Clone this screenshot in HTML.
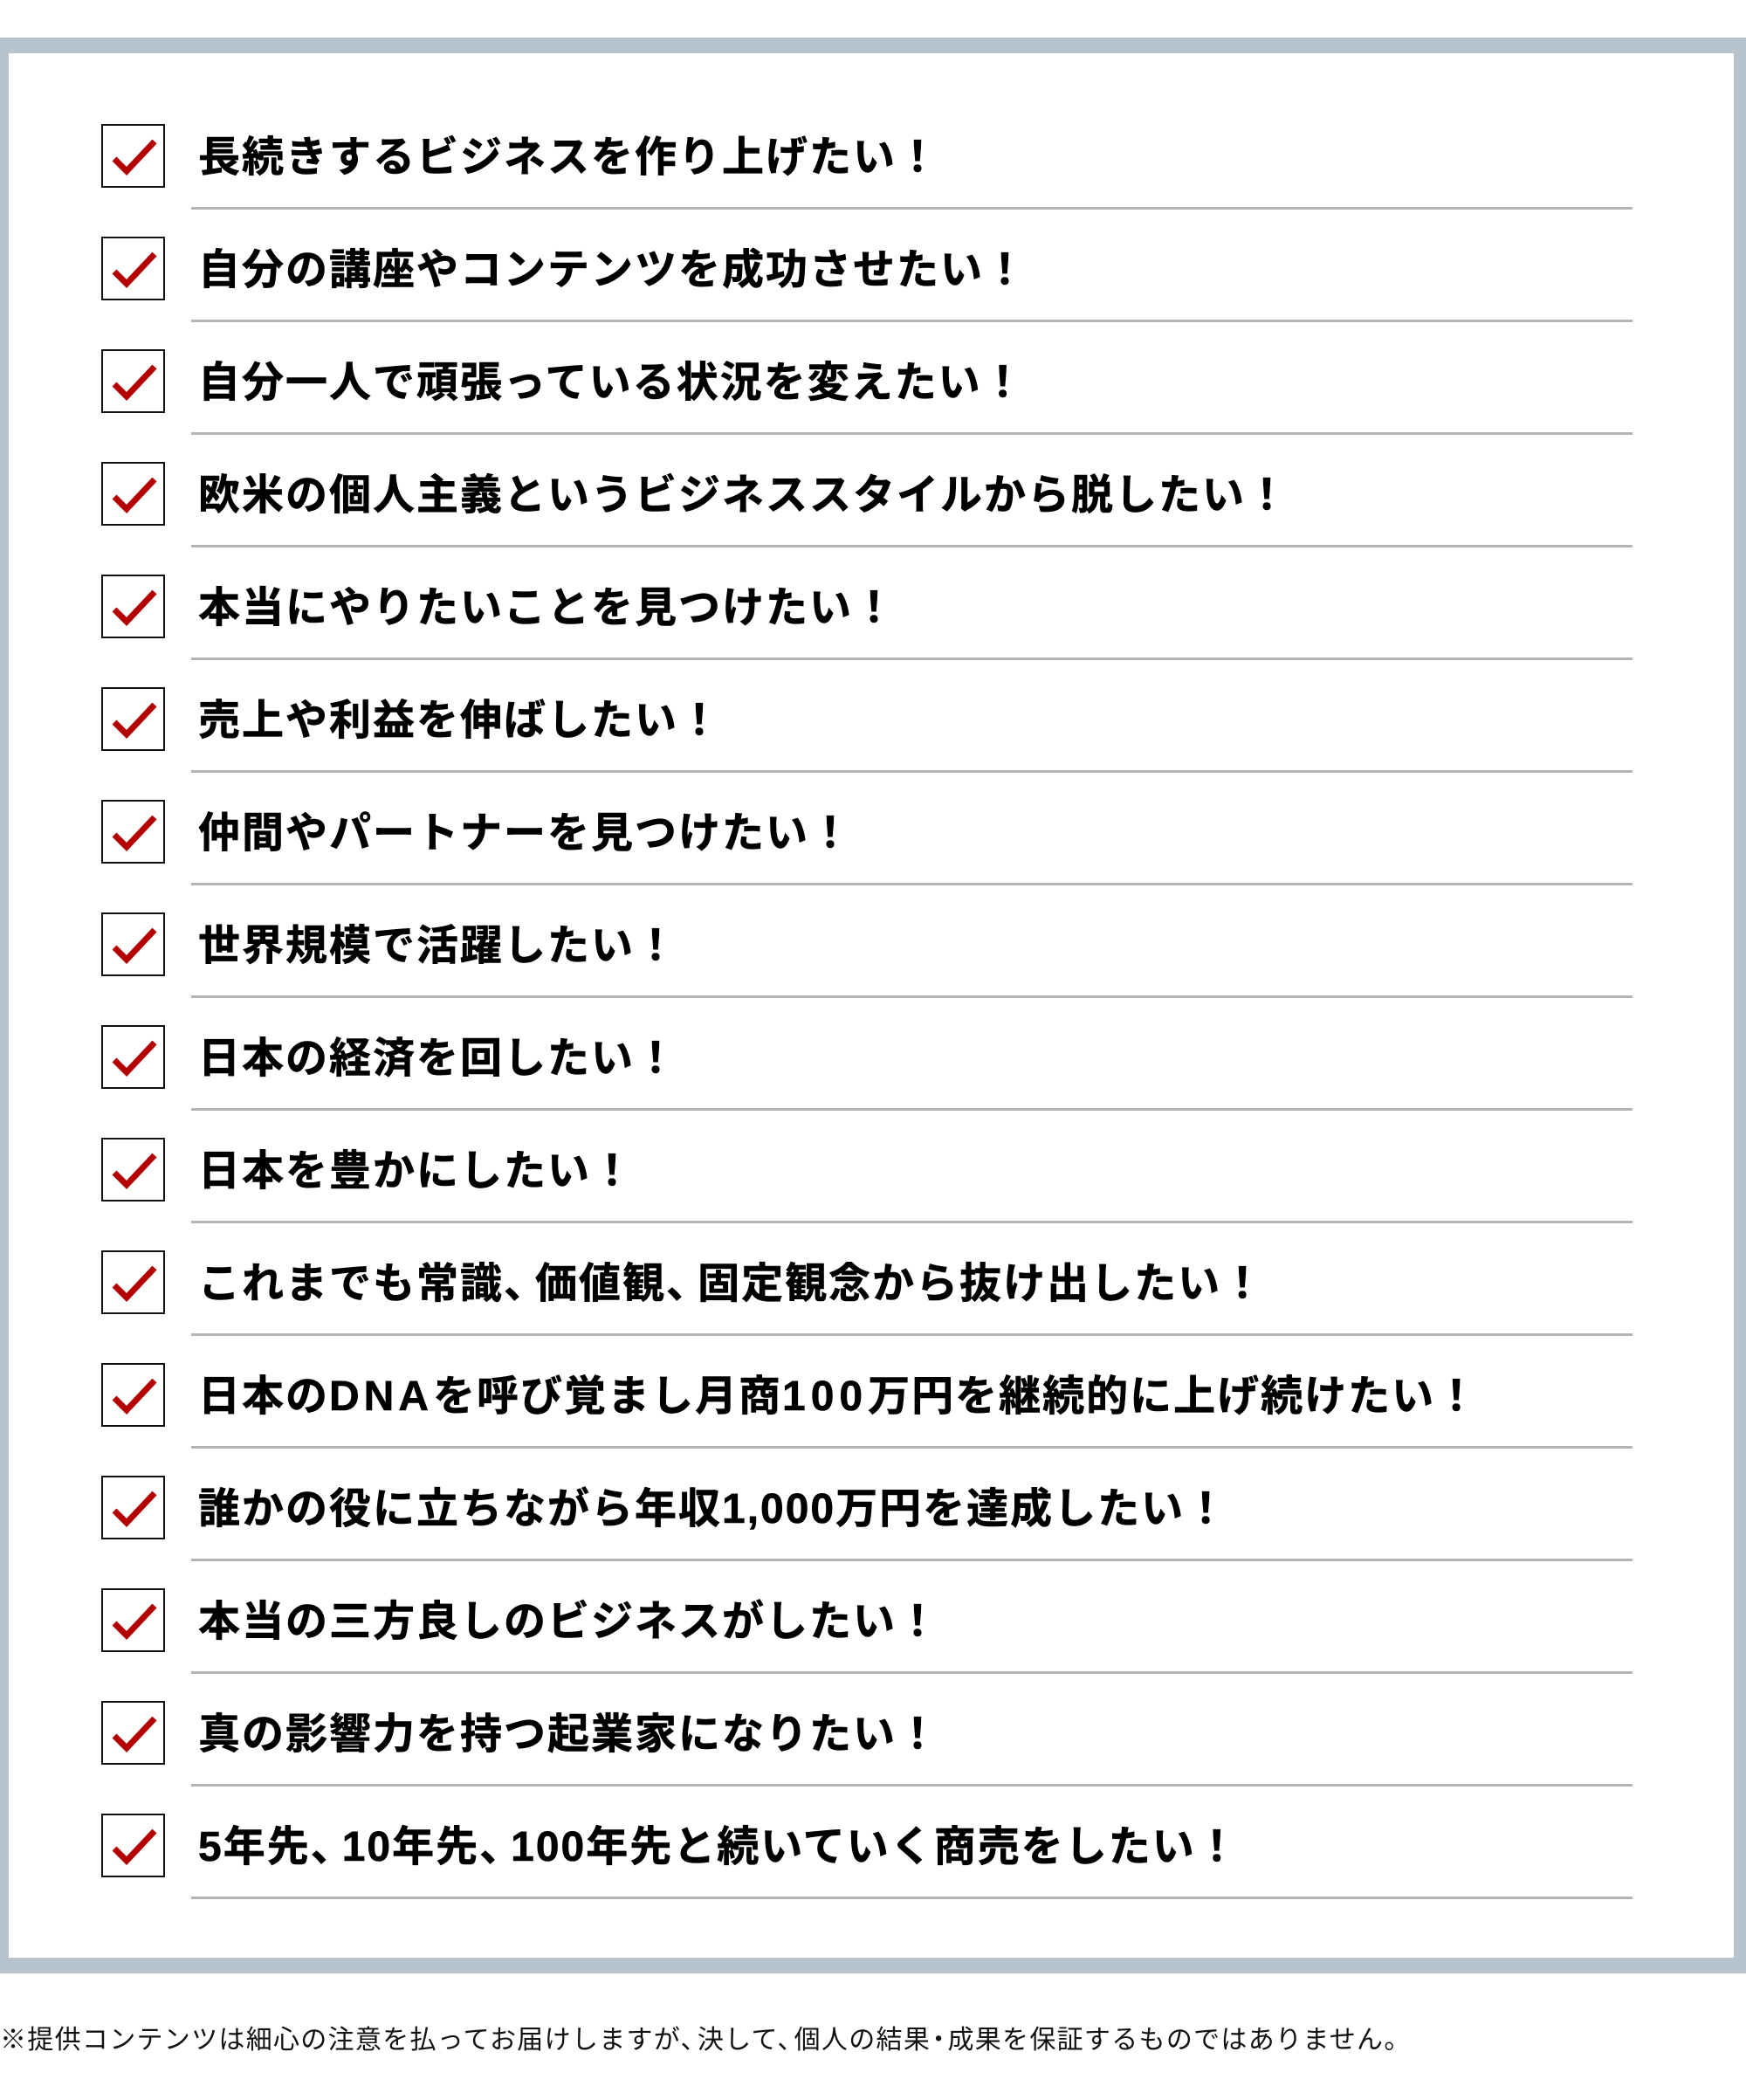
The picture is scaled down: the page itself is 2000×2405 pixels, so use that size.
<!DOCTYPE html>
<html><head><meta charset="utf-8"><style>
html,body{margin:0;padding:0;background:#fff;width:2000px;height:2405px;overflow:hidden;position:relative}
.frame{position:absolute;left:0;top:43px;width:1976px;height:2181px;border-style:solid;border-color:#b7c4cd;border-width:18px 14px 18px 10px;background:#fff}
.row{position:absolute;left:0;width:2000px;height:129px}
.box{position:absolute;left:116px;top:0;width:69px;height:69px;border:2px solid #111;background:#fff}
.box svg{position:absolute;left:-2px;top:-2px}
.t{position:absolute;left:227px;top:15px;height:48px;line-height:48px;font-family:"Liberation Sans","Noto Sans CJK JP",sans-serif;font-weight:bold;font-size:48px;letter-spacing:2px;color:#000;white-space:nowrap;-webkit-text-stroke:0.6px #000}
.c{margin-right:-14px}
.ln{position:absolute;left:219px;top:95px;width:1651px;height:3px;background:#b4b4b4}
.note{position:absolute;left:0;top:2322px;font-family:"Liberation Sans","Noto Sans CJK JP",sans-serif;font-size:30px;line-height:30px;letter-spacing:1.3px;color:#111;white-space:nowrap}
</style></head><body>
<div class="frame"></div>
<div class="row" style="top:142px"><div class="box"><svg width="73" height="73"><path d="M15 40 L29 54 L61 20" fill="none" stroke="#b40000" stroke-width="7"/></svg></div><div class="t">長続きするビジネスを作り上げたい！</div><div class="ln"></div></div>
<div class="row" style="top:271px"><div class="box"><svg width="73" height="73"><path d="M15 40 L29 54 L61 20" fill="none" stroke="#b40000" stroke-width="7"/></svg></div><div class="t">自分の講座やコンテンツを成功させたい！</div><div class="ln"></div></div>
<div class="row" style="top:400px"><div class="box"><svg width="73" height="73"><path d="M15 40 L29 54 L61 20" fill="none" stroke="#b40000" stroke-width="7"/></svg></div><div class="t">自分一人で頑張っている状況を変えたい！</div><div class="ln"></div></div>
<div class="row" style="top:529px"><div class="box"><svg width="73" height="73"><path d="M15 40 L29 54 L61 20" fill="none" stroke="#b40000" stroke-width="7"/></svg></div><div class="t">欧米の個人主義というビジネススタイルから脱したい！</div><div class="ln"></div></div>
<div class="row" style="top:658px"><div class="box"><svg width="73" height="73"><path d="M15 40 L29 54 L61 20" fill="none" stroke="#b40000" stroke-width="7"/></svg></div><div class="t">本当にやりたいことを見つけたい！</div><div class="ln"></div></div>
<div class="row" style="top:787px"><div class="box"><svg width="73" height="73"><path d="M15 40 L29 54 L61 20" fill="none" stroke="#b40000" stroke-width="7"/></svg></div><div class="t">売上や利益を伸ばしたい！</div><div class="ln"></div></div>
<div class="row" style="top:916px"><div class="box"><svg width="73" height="73"><path d="M15 40 L29 54 L61 20" fill="none" stroke="#b40000" stroke-width="7"/></svg></div><div class="t">仲間やパートナーを見つけたい！</div><div class="ln"></div></div>
<div class="row" style="top:1045px"><div class="box"><svg width="73" height="73"><path d="M15 40 L29 54 L61 20" fill="none" stroke="#b40000" stroke-width="7"/></svg></div><div class="t">世界規模で活躍したい！</div><div class="ln"></div></div>
<div class="row" style="top:1174px"><div class="box"><svg width="73" height="73"><path d="M15 40 L29 54 L61 20" fill="none" stroke="#b40000" stroke-width="7"/></svg></div><div class="t">日本の経済を回したい！</div><div class="ln"></div></div>
<div class="row" style="top:1303px"><div class="box"><svg width="73" height="73"><path d="M15 40 L29 54 L61 20" fill="none" stroke="#b40000" stroke-width="7"/></svg></div><div class="t">日本を豊かにしたい！</div><div class="ln"></div></div>
<div class="row" style="top:1432px"><div class="box"><svg width="73" height="73"><path d="M15 40 L29 54 L61 20" fill="none" stroke="#b40000" stroke-width="7"/></svg></div><div class="t">これまでも常識<span class="c">、</span>価値観<span class="c">、</span>固定観念から抜け出したい！</div><div class="ln"></div></div>
<div class="row" style="top:1561px"><div class="box"><svg width="73" height="73"><path d="M15 40 L29 54 L61 20" fill="none" stroke="#b40000" stroke-width="7"/></svg></div><div class="t">日本の<span style="letter-spacing:5px">DNA</span>を呼び覚まし月商<span style="letter-spacing:6px">100</span>万円を継続的に上げ続けたい！</div><div class="ln"></div></div>
<div class="row" style="top:1690px"><div class="box"><svg width="73" height="73"><path d="M15 40 L29 54 L61 20" fill="none" stroke="#b40000" stroke-width="7"/></svg></div><div class="t">誰かの役に立ちながら年収1,000万円を達成したい！</div><div class="ln"></div></div>
<div class="row" style="top:1819px"><div class="box"><svg width="73" height="73"><path d="M15 40 L29 54 L61 20" fill="none" stroke="#b40000" stroke-width="7"/></svg></div><div class="t">本当の三方良しのビジネスがしたい！</div><div class="ln"></div></div>
<div class="row" style="top:1948px"><div class="box"><svg width="73" height="73"><path d="M15 40 L29 54 L61 20" fill="none" stroke="#b40000" stroke-width="7"/></svg></div><div class="t">真の影響力を持つ起業家になりたい！</div><div class="ln"></div></div>
<div class="row" style="top:2077px"><div class="box"><svg width="73" height="73"><path d="M15 40 L29 54 L61 20" fill="none" stroke="#b40000" stroke-width="7"/></svg></div><div class="t">5年先<span class="c">、</span>10年先<span class="c">、</span>100年先と続いていく商売をしたい！</div><div class="ln"></div></div>
<div class="note">※提供コンテンツは細心の注意を払ってお届けしますが<span style="margin-right:-12px">、</span>決して<span style="margin-right:-12px">、</span>個人の結果<span style="margin:0 -6px">・</span>成果を保証するものではありません。</div>
</body></html>
